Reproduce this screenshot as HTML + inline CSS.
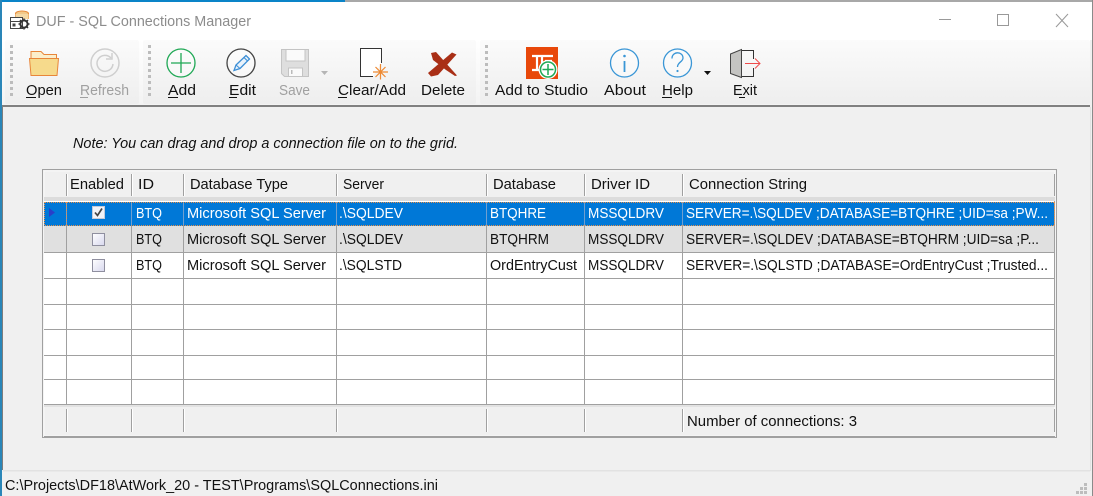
<!DOCTYPE html>
<html><head><meta charset="utf-8"><style>
html,body{margin:0;padding:0;background:#f0f0f0;width:1093px;height:496px;overflow:hidden}
svg{display:block}
text{font-family:"Liberation Sans",sans-serif;font-size:14.5px;fill:#111;white-space:pre}
.w{fill:#fff}.g{fill:#a0a0a0}
</style></head><body>
<svg width="1093" height="496" viewBox="0 0 1093 496" xmlns="http://www.w3.org/2000/svg">
<defs>
<linearGradient id="tb" x1="0" y1="0" x2="0" y2="1"><stop offset="0" stop-color="#fbfbfb"/><stop offset="1" stop-color="#eeeeee"/></linearGradient>
<linearGradient id="bb" x1="0" y1="0" x2="0" y2="1"><stop offset="0" stop-color="#ffffff"/><stop offset="1" stop-color="#f3f3f3"/></linearGradient>
<linearGradient id="cb" x1="0" y1="0" x2="1" y2="1"><stop offset="0" stop-color="#fff"/><stop offset="1" stop-color="#d8d8ee"/></linearGradient>
</defs>
<rect width="1093" height="496" fill="#f0f0f0"/>
<!-- title bar -->
<rect x="0" y="0" width="1093" height="40" fill="#fff"/>
<rect x="0" y="0" width="1093" height="2" fill="#a8a8a8"/>
<rect x="0" y="0" width="345" height="2" fill="#0a84c8"/>
<rect x="0" y="0" width="2" height="496" fill="#2a86b8"/>
<rect x="1092" y="0" width="1" height="496" fill="#8a8a8a"/>
<!-- title icon -->
<ellipse cx="22" cy="13.5" rx="6.5" ry="2.5" fill="#f2c98a" stroke="#e88a3a"/>
<path d="M15.5 13.5V20M28.5 13.5V19" stroke="#e88a3a" fill="none"/>
<rect x="15.5" y="14" width="13" height="5" fill="#f5d9a5"/>
<rect x="10.5" y="17.5" width="12" height="11" fill="#fff" stroke="#444"/>
<path d="M11 21.5H22" stroke="#444"/><rect x="12.5" y="23.5" width="3" height="3" fill="#444"/>
<circle cx="24" cy="24" r="3.6" fill="none" stroke="#333" stroke-width="2"/>
<path d="M24 18.5v2M24 27.5v2M18.5 24h2M27.5 24h2M20 20l1.500 1.500M26.500 26.500L28 28M28 20l-1.500 1.500M20 28l1.500-1.500" stroke="#333" stroke-width="1.500"/>
<text x="36" y="26" textLength="215" lengthAdjust="spacingAndGlyphs" style="font-size:15px;fill:#8c8c8c">DUF - SQL Connections Manager</text>
<!-- window controls -->
<path d="M939 19.500H951" stroke="#999" stroke-width="1"/>
<rect x="997.500" y="14.500" width="11" height="11" fill="none" stroke="#999"/>
<path d="M1056 14L1068 27M1068 14L1056 27" stroke="#999" stroke-width="1"/>
<!-- toolbar -->
<rect x="2" y="40" width="1088" height="65" fill="url(#bb)"/>
<rect x="5" y="40" width="134" height="64" rx="2" fill="url(#tb)"/>
<rect x="143" y="40" width="333" height="64" rx="2" fill="url(#tb)"/>
<rect x="480" y="40" width="610" height="64" rx="2" fill="url(#tb)"/>
<rect x="2" y="105" width="1088" height="2" fill="#808080"/>
<!-- grips -->
<g fill="#bcbcbc">
<rect x="10" y="45" width="3" height="3"/><rect x="10" y="51" width="3" height="3"/><rect x="10" y="57" width="3" height="3"/><rect x="10" y="63" width="3" height="3"/><rect x="10" y="69" width="3" height="3"/><rect x="10" y="75" width="3" height="3"/><rect x="10" y="81" width="3" height="3"/><rect x="10" y="87" width="3" height="3"/><rect x="10" y="93" width="3" height="3"/>
<rect x="148" y="45" width="3" height="3"/><rect x="148" y="51" width="3" height="3"/><rect x="148" y="57" width="3" height="3"/><rect x="148" y="63" width="3" height="3"/><rect x="148" y="69" width="3" height="3"/><rect x="148" y="75" width="3" height="3"/><rect x="148" y="81" width="3" height="3"/><rect x="148" y="87" width="3" height="3"/><rect x="148" y="93" width="3" height="3"/>
<rect x="485" y="45" width="3" height="3"/><rect x="485" y="51" width="3" height="3"/><rect x="485" y="57" width="3" height="3"/><rect x="485" y="63" width="3" height="3"/><rect x="485" y="69" width="3" height="3"/><rect x="485" y="75" width="3" height="3"/><rect x="485" y="81" width="3" height="3"/><rect x="485" y="87" width="3" height="3"/><rect x="485" y="93" width="3" height="3"/>
</g>
<!-- open -->
<path d="M31 58V51.500H41L44 54.500H56.500V58" fill="#fbeecb" stroke="#e8863a"/>
<path d="M29.500 58.500H58.500L57 75.500H31Z" fill="#f6da8c" stroke="#e8863a"/>
<!-- refresh -->
<circle cx="105" cy="63" r="14" fill="none" stroke="#cfcfcf" stroke-width="1.500"/>
<path d="M111 58A8 8 0 1 0 113 64" fill="none" stroke="#cfcfcf" stroke-width="1.500"/>
<path d="M112 53V59H106" fill="none" stroke="#cfcfcf" stroke-width="1.500"/>
<!-- add -->
<circle cx="181" cy="63" r="14" fill="#fff" fill-opacity=".4" stroke="#1fa855" stroke-width="1.300"/>
<path d="M171 63H191M181 53V73" stroke="#1fa855" stroke-width="1.300"/>
<!-- edit -->
<circle cx="241" cy="63" r="14" fill="#fff" fill-opacity=".4" stroke="#444" stroke-width="1.300"/>
<path d="M234 70.500L236 65L246 55.500L249.500 59L240 68.500Z" fill="#e8f2fb" stroke="#3d8fd6" stroke-width="1.300"/>
<path d="M244 57.500L247.500 61M236 65L240 68.500" stroke="#3d8fd6" stroke-width="1"/>
<!-- save -->
<path d="M281.500 49.500H308.500V76.500H284.500L281.500 73.500Z" fill="#dedede" stroke="#c4c4c4"/>
<rect x="286" y="49.500" width="19" height="11.500" fill="#fafafa" stroke="#c4c4c4"/>
<rect x="288.500" y="68" width="14" height="8.500" fill="#fafafa" stroke="#c4c4c4"/>
<rect x="291" y="70" width="1.500" height="4" fill="#bbb"/>
<path d="M321 71H328L324.500 75Z" fill="#b5b5b5"/>
<!-- clear/add -->
<path d="M373 76.500H360.500V48.500H381.500V63" fill="#fff" stroke="#333"/>
<path d="M380.500 64V79.500M373 72H388M375.500 67L385.500 77M385.500 67L375.500 77" stroke="#ee8a33" stroke-width="1.200"/>
<!-- delete -->
<path d="M431 53L436 52L457 75.500L455 76L446 70L433 60Z" fill="#a92f16"/>
<path d="M452 52.500L456.500 54.500L438 75L431 76.500L428 73Z" fill="#a92f16"/>
<!-- studio -->
<rect x="526" y="47" width="32" height="32" fill="#e8480a"/>
<path d="M532 56H553M537 56V70M532 70H540M542 56V66M545 61H552" fill="none" stroke="#fff" stroke-width="2.200"/>
<circle cx="548" cy="69.500" r="9.500" fill="#fff"/>
<circle cx="548" cy="69.500" r="7.500" fill="#fff" stroke="#1fa855" stroke-width="1.500"/>
<path d="M542.500 69.500H553.500M548 64V75" stroke="#1fa855" stroke-width="1.500"/>
<!-- about -->
<circle cx="624.500" cy="63" r="14" fill="#fff" fill-opacity=".4" stroke="#3a96d6" stroke-width="1.300"/>
<path d="M624.500 61V72" stroke="#3a96d6" stroke-width="1.800"/><circle cx="624.500" cy="56" r="1.300" fill="#3a96d6"/>
<!-- help -->
<circle cx="677.500" cy="63" r="14" fill="#fff" fill-opacity=".4" stroke="#3a96d6" stroke-width="1.300"/>
<path d="M672 58.500C672 51 683 51 683 58C683 62 677.500 62 677.500 67" fill="none" stroke="#3a96d6" stroke-width="1.300"/>
<circle cx="677.500" cy="71" r="1.100" fill="#3a96d6"/>
<path d="M704 71H711L707.500 75Z" fill="#111"/>
<!-- exit -->
<path d="M730.500 54L741.500 49.500V77.500L730.500 73.500Z" fill="#c4c4c2" stroke="#444"/>
<path d="M742 50.500H753.500V59M753.500 68V76.500H742" fill="none" stroke="#333"/>
<path d="M745 63.500H759.500M755 58.500L760 63.500L755 68.500" fill="none" stroke="#ef4b4b"/>
<!-- toolbar labels -->
<text x="26" y="95" textLength="36" lengthAdjust="spacingAndGlyphs">Open</text>
<text x="80" y="95" textLength="49" lengthAdjust="spacingAndGlyphs" class="g">Refresh</text>
<text x="168" y="95" textLength="28" lengthAdjust="spacingAndGlyphs">Add</text>
<text x="229" y="95" textLength="27" lengthAdjust="spacingAndGlyphs">Edit</text>
<text x="279" y="95" textLength="31" lengthAdjust="spacingAndGlyphs" class="g">Save</text>
<text x="338" y="95" textLength="68" lengthAdjust="spacingAndGlyphs">Clear/Add</text>
<text x="421" y="95" textLength="44" lengthAdjust="spacingAndGlyphs">Delete</text>
<text x="495" y="95" textLength="93" lengthAdjust="spacingAndGlyphs">Add to Studio</text>
<text x="604" y="95" textLength="42" lengthAdjust="spacingAndGlyphs">About</text>
<text x="662" y="95" textLength="31" lengthAdjust="spacingAndGlyphs">Help</text>
<text x="733" y="95" textLength="24" lengthAdjust="spacingAndGlyphs">Exit</text>
<g stroke="#111" stroke-width="1">
<path d="M26 97.500H36M168 97.500H178M229 97.500H237M338 97.500H347M662 97.500H672M739 97.500H745"/>
<path d="M80 97.500H88" stroke="#a0a0a0"/>
</g>
<!-- content -->
<rect x="2" y="107" width="1" height="363" fill="#7d7d7d"/>
<rect x="3" y="470" width="1087" height="1.500" fill="#e2e2e2"/>
<rect x="1090" y="107" width="1" height="364" fill="#e2e2e2"/>
<text x="73" y="148" textLength="385" lengthAdjust="spacingAndGlyphs" style="font-style:italic">Note: You can drag and drop a connection file on to the grid.</text>
<!-- grid -->
<rect x="42.500" y="169.500" width="1014" height="268" fill="#f0f0f0" stroke="#a0a0a0"/>
<rect x="44" y="171" width="1011" height="265" fill="#f0f0f0" stroke="#fff" stroke-width=".5"/>
<rect x="44" y="197" width="1011" height="4" fill="#dcdcdc"/>
<rect x="44" y="201" width="1011" height="203" fill="#fff"/>
<rect x="44" y="226" width="1011" height="26" fill="#e0e0e0"/>
<rect x="44" y="202" width="1011" height="24" fill="#0078d7"/>
<!-- horizontal lines -->
<g fill="#a0a0a0">
<rect x="44" y="252" width="1011" height="1"/><rect x="44" y="278" width="1011" height="1"/><rect x="44" y="304" width="1011" height="1"/><rect x="44" y="329" width="1011" height="1"/><rect x="44" y="355" width="1011" height="1"/><rect x="44" y="379" width="1011" height="1"/><rect x="44" y="404" width="1011" height="1"/>
<rect x="44" y="436" width="1011" height="1"/>
<!-- vertical lines: body -->
<rect x="66" y="226" width="1" height="178"/><rect x="131" y="226" width="1" height="178"/><rect x="183" y="226" width="1" height="178"/><rect x="336" y="226" width="1" height="178"/><rect x="486" y="226" width="1" height="178"/><rect x="584" y="226" width="1" height="178"/><rect x="682" y="226" width="1" height="178"/><rect x="1054" y="201" width="1" height="203"/>
<!-- header separators -->
<rect x="66" y="174" width="1" height="22"/><rect x="131" y="174" width="1" height="22"/><rect x="183" y="174" width="1" height="22"/><rect x="336" y="174" width="1" height="22"/><rect x="486" y="174" width="1" height="22"/><rect x="584" y="174" width="1" height="22"/><rect x="682" y="174" width="1" height="22"/><rect x="1054" y="174" width="1" height="22"/>
<!-- footer separators -->
<rect x="66" y="409" width="1" height="23"/><rect x="131" y="409" width="1" height="23"/><rect x="183" y="409" width="1" height="23"/><rect x="336" y="409" width="1" height="23"/><rect x="486" y="409" width="1" height="23"/><rect x="584" y="409" width="1" height="23"/><rect x="682" y="409" width="1" height="23"/><rect x="1054" y="409" width="1" height="23"/>
</g>
<g fill="#fff">
<rect x="67" y="174" width="1" height="22"/><rect x="132" y="174" width="1" height="22"/><rect x="184" y="174" width="1" height="22"/><rect x="337" y="174" width="1" height="22"/><rect x="487" y="174" width="1" height="22"/><rect x="585" y="174" width="1" height="22"/><rect x="683" y="174" width="1" height="22"/>
<rect x="67" y="409" width="1" height="23"/><rect x="132" y="409" width="1" height="23"/><rect x="184" y="409" width="1" height="23"/><rect x="337" y="409" width="1" height="23"/><rect x="487" y="409" width="1" height="23"/><rect x="585" y="409" width="1" height="23"/><rect x="683" y="409" width="1" height="23"/>
</g>
<rect x="44" y="405" width="1011" height="2" fill="#e2e2e2"/>
<!-- row 1 separators -->
<g fill="#6f9fd0">
<rect x="66" y="202" width="1" height="24"/><rect x="131" y="202" width="1" height="24"/><rect x="183" y="202" width="1" height="24"/><rect x="336" y="202" width="1" height="24"/><rect x="486" y="202" width="1" height="24"/><rect x="584" y="202" width="1" height="24"/><rect x="682" y="202" width="1" height="24"/>
</g>
<!-- focus border -->
<path d="M45 202.500H1055M45 225.500H1055M44.500 202V226M1054.500 202V226M66.500 202V226" stroke="#e8924a" stroke-dasharray="1 1" fill="none"/>
<!-- row indicator -->
<path d="M49 208L55 212.500L49 217Z" fill="#2a3fc8"/>
<!-- checkboxes -->
<rect x="92.500" y="206.500" width="12" height="12" fill="#f2f3f8" stroke="#c4cad8"/>
<path d="M95 212.500L97.500 215.500L102 208.500" fill="none" stroke="#444" stroke-width="1.700"/>
<rect x="92.500" y="233.500" width="12" height="12" fill="url(#cb)" stroke="#8f8f9f"/>
<rect x="92.500" y="259.500" width="12" height="12" fill="url(#cb)" stroke="#8f8f9f"/>
<!-- header text -->
<text x="70" y="189" textLength="54" lengthAdjust="spacingAndGlyphs">Enabled</text>
<text x="138" y="189" textLength="16" lengthAdjust="spacingAndGlyphs">ID</text>
<text x="190" y="189" textLength="98" lengthAdjust="spacingAndGlyphs">Database Type</text>
<text x="343" y="189" textLength="41" lengthAdjust="spacingAndGlyphs">Server</text>
<text x="493" y="189" textLength="63" lengthAdjust="spacingAndGlyphs">Database</text>
<text x="591" y="189" textLength="59" lengthAdjust="spacingAndGlyphs">Driver ID</text>
<text x="689" y="189" textLength="118" lengthAdjust="spacingAndGlyphs">Connection String</text>
<!-- row 1 -->
<text class="w" x="136" y="218" textLength="26" lengthAdjust="spacingAndGlyphs">BTQ</text>
<text class="w" x="187" y="218" textLength="139" lengthAdjust="spacingAndGlyphs">Microsoft SQL Server</text>
<text class="w" x="339" y="218" textLength="64" lengthAdjust="spacingAndGlyphs">.\SQLDEV</text>
<text class="w" x="490" y="218" textLength="56" lengthAdjust="spacingAndGlyphs">BTQHRE</text>
<text class="w" x="588" y="218" textLength="76" lengthAdjust="spacingAndGlyphs">MSSQLDRV</text>
<text class="w" x="686" y="218" textLength="362" lengthAdjust="spacingAndGlyphs">SERVER=.\SQLDEV ;DATABASE=BTQHRE ;UID=sa ;PW...</text>
<!-- row 2 -->
<text x="136" y="244" textLength="26" lengthAdjust="spacingAndGlyphs">BTQ</text>
<text x="187" y="244" textLength="139" lengthAdjust="spacingAndGlyphs">Microsoft SQL Server</text>
<text x="339" y="244" textLength="64" lengthAdjust="spacingAndGlyphs">.\SQLDEV</text>
<text x="490" y="244" textLength="59" lengthAdjust="spacingAndGlyphs">BTQHRM</text>
<text x="588" y="244" textLength="76" lengthAdjust="spacingAndGlyphs">MSSQLDRV</text>
<text x="686" y="244" textLength="353" lengthAdjust="spacingAndGlyphs">SERVER=.\SQLDEV ;DATABASE=BTQHRM ;UID=sa ;P...</text>
<!-- row 3 -->
<text x="136" y="270" textLength="26" lengthAdjust="spacingAndGlyphs">BTQ</text>
<text x="187" y="270" textLength="139" lengthAdjust="spacingAndGlyphs">Microsoft SQL Server</text>
<text x="339" y="270" textLength="63" lengthAdjust="spacingAndGlyphs">.\SQLSTD</text>
<text x="490" y="270" textLength="87" lengthAdjust="spacingAndGlyphs">OrdEntryCust</text>
<text x="588" y="270" textLength="76" lengthAdjust="spacingAndGlyphs">MSSQLDRV</text>
<text x="686" y="270" textLength="362" lengthAdjust="spacingAndGlyphs">SERVER=.\SQLSTD ;DATABASE=OrdEntryCust ;Trusted...</text>
<!-- footer -->
<text x="687" y="426" textLength="170" lengthAdjust="spacingAndGlyphs">Number of connections: 3</text>
<!-- status bar -->
<text x="5" y="490" textLength="433" lengthAdjust="spacingAndGlyphs">C:\Projects\DF18\AtWork_20 - TEST\Programs\SQLConnections.ini</text>
<g fill="#bdbdbd">
<rect x="1084" y="483" width="3" height="3"/><rect x="1080" y="487" width="3" height="3"/><rect x="1084" y="487" width="3" height="3"/><rect x="1076" y="491" width="3" height="3"/><rect x="1080" y="491" width="3" height="3"/><rect x="1084" y="491" width="3" height="3"/>
</g>
</svg>
</body></html>
